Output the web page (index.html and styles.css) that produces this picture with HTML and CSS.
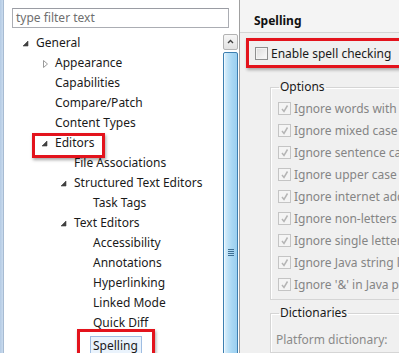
FILE: index.html
```html
<!DOCTYPE html>
<html>
<head>
<meta charset="utf-8">
<link rel="stylesheet" href="styles.css">
</head>
<body>
<div class="frame"></div>
<div class="left">
  <div class="filter">type filter text</div>
  <div class="tree-area">
    <div class="tree">
      <div class="row l0"><span class="tw"><svg width="14" height="20"><polygon points="1,13 6,8 6,13" class="exp"/></svg></span><span>General</span></div>
      <div class="row l1"><span class="tw"><svg width="14" height="20"><polygon points="2.5,7.5 6.5,11 2.5,14.5" class="col"/></svg></span><span>Appearance</span></div>
      <div class="row l1"><span class="tw"></span><span>Capabilities</span></div>
      <div class="row l1"><span class="tw"></span><span>Compare/Patch</span></div>
      <div class="row l1"><span class="tw"></span><span>Content Types</span></div>
      <div class="row l1"><span class="tw"><svg width="14" height="20"><polygon points="1,13 6,8 6,13" class="exp"/></svg></span><span class="mark mark-editors">Editors</span></div>
      <div class="row l2"><span class="tw"></span><span>File Associations</span></div>
      <div class="row l2"><span class="tw"><svg width="14" height="20"><polygon points="1,13 6,8 6,13" class="exp"/></svg></span><span>Structured Text Editors</span></div>
      <div class="row l3"><span class="tw"></span><span>Task Tags</span></div>
      <div class="row l2"><span class="tw"><svg width="14" height="20"><polygon points="1,13 6,8 6,13" class="exp"/></svg></span><span>Text Editors</span></div>
      <div class="row l3"><span class="tw"></span><span>Accessibility</span></div>
      <div class="row l3"><span class="tw"></span><span>Annotations</span></div>
      <div class="row l3"><span class="tw"></span><span>Hyperlinking</span></div>
      <div class="row l3"><span class="tw"></span><span>Linked Mode</span></div>
      <div class="row l3"><span class="tw"></span><span>Quick Diff</span></div>
      <div class="row l3"><span class="tw"></span><span class="sel mark mark-spelling">Spelling</span></div>
    </div>
    <div class="scrollbar">
      <div class="sb-btn"><svg width="13" height="14"><polyline points="4,8 6.5,5.5 9,8" class="arrow"/></svg></div>
      <div class="sb-thumb"><div class="grip"><i></i><i></i><i></i><i></i></div></div>
    </div>
  </div>
</div>
<div class="divider"></div>
<div class="right">
  <div class="header">Spelling</div>
  <div class="enable"><span class="cb"></span><span>Enable spell checking</span></div>
  <fieldset class="group">
    <legend>Options</legend>
    <div class="opt"><span class="cb dis"><svg width="11" height="11"><polyline points="3,6 5,8.5 8.5,2.5" class="chk"/></svg></span><span>Ignore words with digits</span></div>
    <div class="opt"><span class="cb dis"><svg width="11" height="11"><polyline points="3,6 5,8.5 8.5,2.5" class="chk"/></svg></span><span>Ignore mixed case words</span></div>
    <div class="opt"><span class="cb dis"><svg width="11" height="11"><polyline points="3,6 5,8.5 8.5,2.5" class="chk"/></svg></span><span>Ignore sentence capitalization</span></div>
    <div class="opt"><span class="cb dis"><svg width="11" height="11"><polyline points="3,6 5,8.5 8.5,2.5" class="chk"/></svg></span><span>Ignore upper case words</span></div>
    <div class="opt"><span class="cb dis"><svg width="11" height="11"><polyline points="3,6 5,8.5 8.5,2.5" class="chk"/></svg></span><span>Ignore internet addresses</span></div>
    <div class="opt"><span class="cb dis"><svg width="11" height="11"><polyline points="3,6 5,8.5 8.5,2.5" class="chk"/></svg></span><span>Ignore non-letters at word boundaries</span></div>
    <div class="opt"><span class="cb dis"><svg width="11" height="11"><polyline points="3,6 5,8.5 8.5,2.5" class="chk"/></svg></span><span>Ignore single letters</span></div>
    <div class="opt"><span class="cb dis"><svg width="11" height="11"><polyline points="3,6 5,8.5 8.5,2.5" class="chk"/></svg></span><span>Ignore Java string literals</span></div>
    <div class="opt"><span class="cb dis"><svg width="11" height="11"><polyline points="3,6 5,8.5 8.5,2.5" class="chk"/></svg></span><span>Ignore '&amp;' in Java properties files</span></div>
  </fieldset>
  <fieldset class="group dict">
    <legend>Dictionaries</legend>
    <div class="plat">Platform dictionary:</div>
  </fieldset>
</div>
</body>
</html>
```
FILE: styles.css
```css
html, body {
  margin: 0;
  padding: 0;
}
body {
  width: 399px;
  height: 353px;
  overflow: hidden;
  display: flex;
  font-family: "Noto Sans", "Open Sans", sans-serif;
  font-size: 12px;
  color: #1a1a1a;
  background: #fff;
}
.frame {
  width: 3px;
  flex: none;
  background: linear-gradient(to right, #b5cbe4, #c9dbee);
  border-right: 1px solid #a7bbd2;
}
.left {
  width: 234px;
  flex: none;
  background: #fff;
  display: flex;
  flex-direction: column;
}
.filter {
  margin: 8px 0 0 8px;
  width: 217px;
  height: 20px;
  box-sizing: border-box;
  border: 1px solid #abadb3;
  border-top-color: #9a9ca3;
  padding-left: 3px;
  line-height: 17px;
  color: #6f6f6f;
  font-size: 12px;
}
.tree-area {
  margin-top: 4px;
  flex: 1;
  display: flex;
  min-height: 0;
}
.tree {
  flex: 1;
  padding-top: 1px;
}
.row {
  height: 20px;
  line-height: 20px;
  display: flex;
  white-space: nowrap;
}
.row.l0 { padding-left: 18px; }
.row.l1 { padding-left: 37px; }
.row.l2 { padding-left: 56px; }
.row.l3 { padding-left: 75px; }
.tw {
  width: 14px;
  height: 20px;
  flex: none;
}
.tw svg { display: block; }
.exp { fill: #404040; stroke: #404040; stroke-width: 0.6; }
.col { fill: #fff; stroke: #9a9a9a; stroke-width: 1; }
.mark { position: relative; }
.mark::after {
  content: "";
  position: absolute;
  border: 3px solid #e3131c;
  box-shadow: 1px 2px 3px rgba(0, 0, 0, 0.35);
  box-sizing: border-box;
}
.mark-editors::after {
  left: -23px;
  top: 0;
  width: 73px;
  height: 25px;
}
.sel {
  margin-left: -3px;
  margin-top: 3px;
  padding: 0 3px 0 2px;
  height: 18px;
  line-height: 17px;
  border: 1px solid #9fbde2;
  background: #eaf3fc;
}
.mark-spelling::after {
  left: -14px;
  top: -8px;
  width: 78px;
  height: 34px;
}
.scrollbar {
  width: 15px;
  flex: none;
  margin-top: 2px;
  display: flex;
  flex-direction: column;
  gap: 2px;
}
.sb-btn {
  height: 16px;
  box-sizing: border-box;
  border: 1px solid #b3b3b3;
  border-radius: 2px;
  background: linear-gradient(to bottom, #f7f7f7, #e2e2e2);
  display: flex;
  justify-content: center;
  align-items: center;
}
.sb-btn svg { display: block; }
.arrow { fill: none; stroke: #404040; stroke-width: 1.4; }
.sb-thumb {
  flex: 1;
  margin-bottom: -10px;
  box-sizing: border-box;
  border: 1px solid #3c7fb1;
  border-radius: 2px;
  background: linear-gradient(to right, #dff1fc 0, #bfe2f7 30%, #a9d8f4 60%, #9bcfef 100%);
  box-shadow: inset 1px 0 0 #eef8fe;
  padding-top: 196px;
}
.grip {
  display: flex;
  flex-direction: column;
  gap: 1px;
  align-items: center;
}
.grip i {
  display: block;
  width: 6px;
  height: 1px;
  background: #3d6f94;
}
.divider {
  width: 1px;
  flex: none;
  background: #a0a0a0;
  margin-left: 1px;
}
.right {
  flex: 1;
  background: #f0f0f0;
  overflow: hidden;
  white-space: nowrap;
}
.header {
  height: 33px;
  box-sizing: border-box;
  border-bottom: 1px solid #d4d4d4;
  background: #f4f4f4;
  padding-left: 14px;
  line-height: 41px;
  font-weight: bold;
  font-size: 12px;
  color: #111;
}
.enable {
  margin: 5px 0 0 6px;
  width: 160px;
  height: 30px;
  box-sizing: border-box;
  border: 3px solid #e3131c;
  box-shadow: 1px 2px 3px rgba(0, 0, 0, 0.3);
  display: flex;
  align-items: center;
  padding-left: 6px;
  gap: 3px;
}
.cb {
  width: 13px;
  height: 13px;
  box-sizing: border-box;
  border: 1px solid #8e8f8f;
  background: linear-gradient(135deg, #dcdcdc, #fbfbfb);
  box-shadow: inset 0 0 0 1px #f4f4f4;
  flex: none;
  display: flex;
  align-items: center;
  justify-content: center;
}
.cb.dis {
  border-color: #c4c4c4;
  background: #f4f4f4;
  box-shadow: none;
}
.cb svg { display: block; }
.chk { fill: none; stroke: #b5b5b5; stroke-width: 1.5; }
.group {
  margin: 11px 0 0 30px;
  width: 200px;
  border: 1px solid #d5d5d5;
  border-right: none;
  padding: 0 0 4px 8px;
  box-shadow: inset 1px 1px 0 #fff;
}
.group legend {
  padding: 0 1px;
  line-height: 16px;
  color: #1a1a1a;
}
.opt {
  height: 22px;
  display: flex;
  align-items: center;
  gap: 3px;
  color: #858585;
  margin-left: -1px;
}
.group .opt:first-of-type { margin-top: 2px; }
.dict {
  margin-top: 5px;
}
.plat {
  margin-top: 11px;
  margin-left: -3px;
  color: #8a8a8a;
  line-height: 16px;
}
```
